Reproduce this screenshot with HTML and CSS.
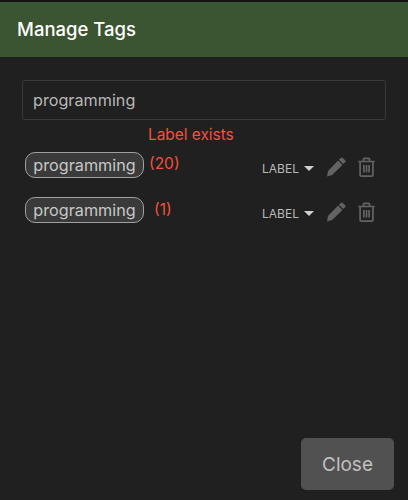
FILE: index.html
```html
<!DOCTYPE html>
<html lang="en">
<head>
  <meta charset="UTF-8" />
  <title>Manage Tags</title>
  <link rel="stylesheet" href="styles.css">
</head>
<body>
  <div class="dialog">
    <div class="dialog-header">Manage Tags</div>

    <div class="dialog-body">
      <input class="tag-input" type="text" value="programming" />
      <div class="tag-error">Label exists</div>

      <div class="tag-row">
        <span class="tag-chip">programming</span>
        <span class="tag-count">(20)</span>
        <span class="tag-type">LABEL <span class="caret"></span></span>
        <svg class="icon icon-pencil" viewBox="0 0 20 20" aria-hidden="true">
          <path d="M14.8.9a1.4 1.4 0 0 1 2 0l2.3 2.3a1.4 1.4 0 0 1 0 2l-1.9 1.9-4.3-4.3zM12.1 3.6l4.3 4.3L6.2 18.1 1 19.4 2 14z" />
        </svg>
        <svg class="icon icon-trash" viewBox="0 0 18 20" aria-hidden="true">
          <path d="M.8 4.5h16.4M6 4.5V2c0-.4.3-.7.7-.7h4.6c.4 0 .7.3.7.7v2.5M2.6 4.5v13.4c0 .7.5 1.2 1.2 1.2h10.4c.7 0 1.2-.5 1.2-1.2V4.5M6.4 8v7.5M9 8v7.5M11.6 8v7.5" />
        </svg>
      </div>

      <div class="tag-row">
        <span class="tag-chip">programming</span>
        <span class="tag-count tag-count-single">(1)</span>
        <span class="tag-type">LABEL <span class="caret"></span></span>
        <svg class="icon icon-pencil" viewBox="0 0 20 20" aria-hidden="true">
          <path d="M14.8.9a1.4 1.4 0 0 1 2 0l2.3 2.3a1.4 1.4 0 0 1 0 2l-1.9 1.9-4.3-4.3zM12.1 3.6l4.3 4.3L6.2 18.1 1 19.4 2 14z" />
        </svg>
        <svg class="icon icon-trash" viewBox="0 0 18 20" aria-hidden="true">
          <path d="M.8 4.5h16.4M6 4.5V2c0-.4.3-.7.7-.7h4.6c.4 0 .7.3.7.7v2.5M2.6 4.5v13.4c0 .7.5 1.2 1.2 1.2h10.4c.7 0 1.2-.5 1.2-1.2V4.5M6.4 8v7.5M9 8v7.5M11.6 8v7.5" />
        </svg>
      </div>
    </div>

    <div class="dialog-footer">
      <button class="close-btn">Close</button>
    </div>
  </div>
</body>
</html>
```

FILE: styles.css
```css
* {
  box-sizing: border-box;
  margin: 0;
  padding: 0;
}

body {
  font-family: Inter, "Liberation Sans", sans-serif;
  background: #202020;
  color: #c4c4c4;
}

.dialog {
  display: flex;
  flex-direction: column;
  height: 500px;
  border-top: 2px solid #141414;
}

.dialog-header {
  height: 55px;
  padding-left: 17px;
  line-height: 55px;
  background: #3b5431;
  color: #fff;
  font-size: 18.5px;
  font-weight: 500;
}

.dialog-body {
  flex: 1;
  padding: 23px 22px 0;
}

.tag-input {
  display: block;
  width: 364px;
  height: 40px;
  padding: 0 10px;
  background: transparent;
  border: 1px solid #3a3a3a;
  border-radius: 3px;
  color: #b8b8b8;
  font-family: inherit;
  font-size: 16.2px;
}

.tag-error {
  height: 32px;
  padding-left: 126px;
  padding-top: 6px;
  color: #f5513b;
  font-size: 15.4px;
  line-height: 18px;
}

.tag-row {
  display: flex;
  align-items: center;
  height: 26px;
  margin-bottom: 19px;
  padding-left: 3px;
}

.tag-chip {
  width: 119px;
  height: 26px;
  background: #3a3a3a;
  border: 1px solid #a0a0a0;
  border-radius: 10px;
  color: #c8c8c8;
  font-size: 16.2px;
  line-height: 24px;
  text-align: center;
}

.tag-count {
  width: 113px;
  margin-left: 5px;
  margin-top: -3px;
  color: #f5513b;
  font-size: 15.5px;
}

.tag-count-single {
  width: 108px;
  margin-left: 10px;
  margin-top: -1px;
}

.tag-type {
  display: flex;
  align-items: center;
  gap: 5px;
  width: 64px;
  margin-top: 7px;
  color: #b8b8b8;
  font-size: 12px;
}

.caret {
  width: 0;
  height: 0;
  border-left: 5px solid transparent;
  border-right: 5px solid transparent;
  border-top: 5px solid #d0d0d0;
}

.icon {
  display: block;
  margin-top: 4px;
}

.icon-pencil {
  width: 20px;
  height: 20px;
  fill: #636363;
}

.icon-trash {
  width: 19px;
  height: 20px;
  margin-left: 11px;
  fill: none;
  stroke: #636363;
  stroke-width: 1.7;
}

.dialog-footer {
  display: flex;
  justify-content: flex-end;
  padding: 0 14px 10px 0;
}

.close-btn {
  width: 93px;
  height: 52px;
  background: #515151;
  border: none;
  border-radius: 5px;
  color: #c0c0c0;
  font-family: inherit;
  font-size: 19px;
}
```
